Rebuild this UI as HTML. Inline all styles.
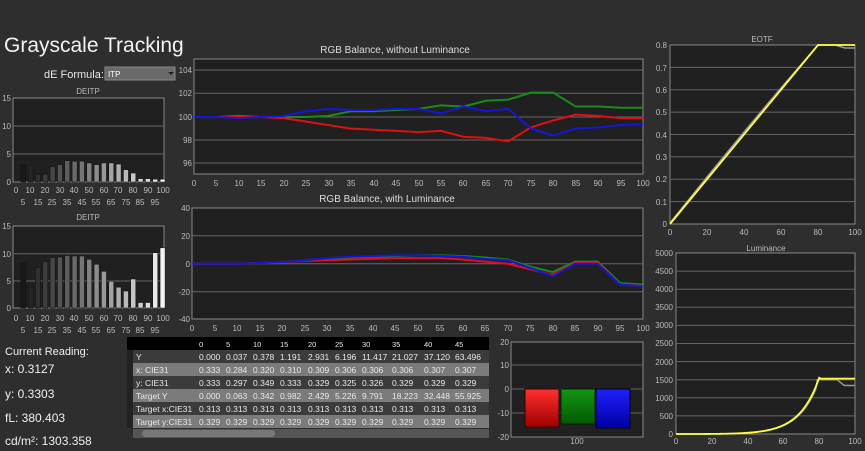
<!DOCTYPE html>
<html><head><meta charset="utf-8"><style>
html,body{margin:0;padding:0;background:#2e2e2e;width:865px;height:451px;overflow:hidden}
svg{display:block;font-family:"Liberation Sans",sans-serif}
.t{fill:#bbb;font-size:8px}
.g{stroke:#666;stroke-width:1}
.ax{stroke:#999;stroke-width:1;fill:none}
.w{fill:#fff}
</style></head><body>
<svg id="s" width="865" height="451" viewBox="0 0 865 451" xmlns="http://www.w3.org/2000/svg">
<text x="4" y="52" fill="#f2f2f2" font-size="21">Grayscale Tracking</text>
<text x="44" y="78" fill="#e8e8e8" font-size="11">dE Formula:</text>
<rect x="105" y="67" width="70" height="13" fill="#6a6a6a" stroke="#888"/>
<text x="108" y="77" fill="#fff" font-size="8">ITP</text>
<path d="M168 72 l3 3 3-3z" fill="#222"/>

<!-- left histograms -->
<text x="88" y="94" class="t" text-anchor="middle" font-size="7">DEITP</text>
<rect x="13" y="98" width="151" height="84" fill="#202020" stroke="#888"/>
<g class="g"><line x1="13" x2="164" y1="126" y2="126"/><line x1="13" x2="164" y1="154" y2="154"/></g>
<g class="t" text-anchor="end"><text x="11" y="101">15</text><text x="11" y="129">10</text><text x="11" y="157">5</text><text x="11" y="185">0</text></g>
<text x="88" y="220" class="t" text-anchor="middle" font-size="7">DEITP</text>
<rect x="13" y="226" width="151" height="82" fill="#202020" stroke="#888"/>
<g class="g"><line x1="13" x2="164" y1="253.7" y2="253.7"/><line x1="13" x2="164" y1="281" y2="281"/></g>
<g class="t" text-anchor="end"><text x="11" y="229">15</text><text x="11" y="257">10</text><text x="11" y="284">5</text><text x="11" y="311">0</text></g>
<g id="hist"></g>
<g class="t" text-anchor="middle">
<text x="16" y="193">0</text><text x="30" y="193">10</text><text x="45" y="193">20</text><text x="60" y="193">30</text><text x="74" y="193">40</text><text x="89" y="193">50</text><text x="104" y="193">60</text><text x="118" y="193">70</text><text x="133" y="193">80</text><text x="148" y="193">90</text><text x="163" y="193">100</text>
<text x="23" y="205">5</text><text x="38" y="205">15</text><text x="52" y="205">25</text><text x="67" y="205">35</text><text x="82" y="205">45</text><text x="96" y="205">55</text><text x="111" y="205">65</text><text x="126" y="205">75</text><text x="140" y="205">85</text><text x="155" y="205">95</text>
<text x="16" y="321">0</text><text x="30" y="321">10</text><text x="45" y="321">20</text><text x="60" y="321">30</text><text x="74" y="321">40</text><text x="89" y="321">50</text><text x="104" y="321">60</text><text x="118" y="321">70</text><text x="133" y="321">80</text><text x="148" y="321">90</text><text x="163" y="321">100</text>
<text x="23" y="333">5</text><text x="38" y="333">15</text><text x="52" y="333">25</text><text x="67" y="333">35</text><text x="82" y="333">45</text><text x="96" y="333">55</text><text x="111" y="333">65</text><text x="126" y="333">75</text><text x="140" y="333">85</text><text x="155" y="333">95</text>
</g>

<!-- RGB chart 1 -->
<text x="395" y="53" fill="#ddd" font-size="10" text-anchor="middle">RGB Balance, without Luminance</text>
<rect x="194" y="59" width="449" height="115" fill="#202020" stroke="#888"/>
<g class="g"><line x1="194" x2="643" y1="70" y2="70"/><line x1="194" x2="643" y1="93.3" y2="93.3"/><line x1="194" x2="643" y1="117" y2="117"/><line x1="194" x2="643" y1="140" y2="140"/><line x1="194" x2="643" y1="163" y2="163"/></g>
<g class="t" text-anchor="end"><text x="192" y="73">104</text><text x="192" y="96">102</text><text x="192" y="120">100</text><text x="192" y="143">98</text><text x="192" y="166">96</text></g>
<g class="t" text-anchor="middle">
<text x="194" y="186">0</text><text x="216" y="186">5</text><text x="239" y="186">10</text><text x="261" y="186">15</text><text x="284" y="186">20</text><text x="306" y="186">25</text><text x="329" y="186">30</text><text x="351" y="186">35</text><text x="374" y="186">40</text><text x="396" y="186">45</text><text x="419" y="186">50</text><text x="441" y="186">55</text><text x="463" y="186">60</text><text x="486" y="186">65</text><text x="508" y="186">70</text><text x="531" y="186">75</text><text x="553" y="186">80</text><text x="576" y="186">85</text><text x="598" y="186">90</text><text x="621" y="186">95</text><text x="643" y="186">100</text>
</g>
<!-- RGB chart 2 -->
<text x="387" y="202" fill="#ddd" font-size="10" text-anchor="middle">RGB Balance, with Luminance</text>
<rect x="192" y="208" width="451" height="111" fill="#202020" stroke="#888"/>
<g class="g"><line x1="192" x2="643" y1="235.7" y2="235.7"/><line x1="192" x2="643" y1="263.7" y2="263.7"/><line x1="192" x2="643" y1="291.7" y2="291.7"/></g>
<g class="t" text-anchor="end"><text x="190" y="211">40</text><text x="190" y="239">20</text><text x="190" y="267">0</text><text x="190" y="295">-20</text><text x="190" y="322">-40</text></g>
<g class="t" text-anchor="middle">
<text x="192" y="331">0</text><text x="215" y="331">5</text><text x="237" y="331">10</text><text x="260" y="331">15</text><text x="282" y="331">20</text><text x="305" y="331">25</text><text x="327" y="331">30</text><text x="350" y="331">35</text><text x="373" y="331">40</text><text x="395" y="331">45</text><text x="418" y="331">50</text><text x="440" y="331">55</text><text x="463" y="331">60</text><text x="485" y="331">65</text><text x="508" y="331">70</text><text x="530" y="331">75</text><text x="553" y="331">80</text><text x="575" y="331">85</text><text x="598" y="331">90</text><text x="620" y="331">95</text><text x="643" y="331">100</text>
</g>
<g id="lines" fill="none" stroke-width="2"></g>

<!-- EOTF -->
<text x="762" y="42" class="t" text-anchor="middle" font-size="7">EOTF</text>
<rect x="670" y="45" width="185" height="179" fill="#202020" stroke="#888"/>
<g class="g" id="eg"></g>
<g class="t" text-anchor="end"><text x="667" y="48">0.8</text><text x="667" y="71">0.7</text><text x="667" y="93">0.6</text><text x="667" y="115">0.5</text><text x="667" y="138">0.4</text><text x="667" y="160">0.3</text><text x="667" y="182">0.2</text><text x="667" y="205">0.1</text><text x="667" y="227">0</text></g>
<g class="t" text-anchor="middle"><text x="670" y="235">0</text><text x="707" y="235">20</text><text x="744" y="235">40</text><text x="781" y="235">60</text><text x="818" y="235">80</text><text x="855" y="235">100</text></g>
<!-- Luminance -->
<text x="766" y="251" class="t" text-anchor="middle" font-size="7">Luminance</text>
<rect x="676" y="253" width="179" height="181" fill="#202020" stroke="#888"/>
<g class="g" id="lg"></g>
<g class="t" text-anchor="end"><text x="673" y="256">5000</text><text x="673" y="274">4500</text><text x="673" y="292">4000</text><text x="673" y="310">3500</text><text x="673" y="328">3000</text><text x="673" y="346">2500</text><text x="673" y="365">2000</text><text x="673" y="383">1500</text><text x="673" y="401">1000</text><text x="673" y="419">500</text><text x="673" y="437">0</text></g>
<g class="t" text-anchor="middle"><text x="676" y="444">0</text><text x="712" y="444">20</text><text x="748" y="444">40</text><text x="783" y="444">60</text><text x="819" y="444">80</text><text x="855" y="444">100</text></g>
<g id="curves" fill="none"></g>

<!-- readings -->
<g fill="#f0f0f0" font-size="11">
<text x="5" y="355">Current Reading:</text>
<text x="5" y="373" font-size="12">x: 0.3127</text>
<text x="5" y="398" font-size="12">y: 0.3303</text>
<text x="5" y="422" font-size="12">fL: 380.403</text>
<text x="5" y="445" font-size="12">cd/m²: 1303.358</text>
</g>

<!-- table -->
<rect x="127" y="337" width="6" height="13" fill="#000"/>
<rect x="133" y="337" width="356" height="13" fill="#000"/>
<rect x="127" y="350" width="6" height="78" fill="#222"/>
<rect x="133" y="350" width="356" height="13" fill="#3b3b3b"/>
<rect x="133" y="363" width="356" height="13" fill="#7b7b7b"/>
<rect x="133" y="376" width="356" height="13" fill="#3b3b3b"/>
<rect x="133" y="389" width="356" height="13" fill="#7b7b7b"/>
<rect x="133" y="402" width="356" height="13" fill="#3b3b3b"/>
<rect x="133" y="415" width="356" height="13" fill="#7b7b7b"/>
<rect x="133" y="429" width="356" height="9" fill="#555"/>
<rect x="142" y="430" width="133" height="7" rx="3" fill="#777"/>
<g fill="#e8e8e8" font-size="8.5">
<text y="347" font-size="7.5"><tspan x="199">0</tspan><tspan x="226">5</tspan><tspan x="253">10</tspan><tspan x="280">15</tspan><tspan x="308">20</tspan><tspan x="335">25</tspan><tspan x="362">30</tspan><tspan x="392">35</tspan><tspan x="424">40</tspan><tspan x="455">45</tspan></text>
<text y="360"><tspan x="136">Y</tspan><tspan x="199">0.000</tspan><tspan x="226">0.037</tspan><tspan x="253">0.378</tspan><tspan x="280">1.191</tspan><tspan x="308">2.931</tspan><tspan x="335">6.196</tspan><tspan x="362">11.417</tspan><tspan x="392">21.027</tspan><tspan x="424">37.120</tspan><tspan x="455">63.496</tspan></text>
<text y="373"><tspan x="136">x: CIE31</tspan><tspan x="199">0.333</tspan><tspan x="226">0.284</tspan><tspan x="253">0.320</tspan><tspan x="280">0.310</tspan><tspan x="308">0.309</tspan><tspan x="335">0.306</tspan><tspan x="362">0.306</tspan><tspan x="392">0.306</tspan><tspan x="424">0.307</tspan><tspan x="455">0.307</tspan></text>
<text y="386"><tspan x="136">y: CIE31</tspan><tspan x="199">0.333</tspan><tspan x="226">0.297</tspan><tspan x="253">0.349</tspan><tspan x="280">0.333</tspan><tspan x="308">0.329</tspan><tspan x="335">0.325</tspan><tspan x="362">0.326</tspan><tspan x="392">0.329</tspan><tspan x="424">0.329</tspan><tspan x="455">0.329</tspan></text>
<text y="399"><tspan x="136">Target Y</tspan><tspan x="199">0.000</tspan><tspan x="226">0.063</tspan><tspan x="253">0.342</tspan><tspan x="280">0.982</tspan><tspan x="308">2.429</tspan><tspan x="335">5.226</tspan><tspan x="362">9.791</tspan><tspan x="392">18.223</tspan><tspan x="424">32.448</tspan><tspan x="455">55.925</tspan></text>
<text y="412"><tspan x="136">Target x:CIE31</tspan><tspan x="199">0.313</tspan><tspan x="226">0.313</tspan><tspan x="253">0.313</tspan><tspan x="280">0.313</tspan><tspan x="308">0.313</tspan><tspan x="335">0.313</tspan><tspan x="362">0.313</tspan><tspan x="392">0.313</tspan><tspan x="424">0.313</tspan><tspan x="455">0.313</tspan></text>
<text y="425"><tspan x="136">Target y:CIE31</tspan><tspan x="199">0.329</tspan><tspan x="226">0.329</tspan><tspan x="253">0.329</tspan><tspan x="280">0.329</tspan><tspan x="308">0.329</tspan><tspan x="335">0.329</tspan><tspan x="362">0.329</tspan><tspan x="392">0.329</tspan><tspan x="424">0.329</tspan><tspan x="455">0.329</tspan></text>
</g>

<!-- bar chart -->
<rect x="511" y="342" width="132" height="95" fill="#202020" stroke="#888"/>
<g class="g"><line x1="511" x2="643" y1="365" y2="365"/><line x1="511" x2="643" y1="389" y2="389"/><line x1="511" x2="643" y1="413" y2="413"/></g>
<g class="t" text-anchor="end"><text x="509" y="345">20</text><text x="509" y="368">10</text><text x="509" y="392">0</text><text x="509" y="416">-10</text><text x="509" y="440">-20</text></g>
<text x="577" y="444" class="t" text-anchor="middle">100</text>
<defs>
<linearGradient id="rg" x1="0" y1="0" x2="0" y2="1"><stop offset="0" stop-color="#ff3030"/><stop offset="1" stop-color="#a00000"/></linearGradient>
<linearGradient id="gg" x1="0" y1="0" x2="0" y2="1"><stop offset="0" stop-color="#139613"/><stop offset="1" stop-color="#045a04"/></linearGradient>
<linearGradient id="bg" x1="0" y1="0" x2="0" y2="1"><stop offset="0" stop-color="#2020ff"/><stop offset="1" stop-color="#0000a0"/></linearGradient>
</defs>
<rect x="525" y="389" width="34" height="38" fill="url(#rg)" stroke="#300" />
<rect x="561" y="389" width="34" height="35" fill="url(#gg)" stroke="#020"/>
<rect x="596" y="389" width="34" height="39" fill="url(#bg)" stroke="#002"/>
</svg>
<script>
var NS="http://www.w3.org/2000/svg";
function el(p,t,a){var e=document.createElementNS(NS,t);for(var k in a)e.setAttribute(k,a[k]);p.appendChild(e);return e;}
var h=document.getElementById('hist');
var top1=[3.1,2.9,1.4,1.4,2.7,3.1,3.8,3.7,3.7,3.4,3.1,3.4,3.4,3.2,2.2,1.6,0.6,0.6,0.5,0.5];
var bot=[8.2,4,7.4,8.5,9.2,9.3,9.6,9.5,9.5,8.9,8,6.7,4.9,3.8,3.1,5.3,1,1,10.1,11];
for(var i=0;i<20;i++){var x=23.3+i*7.33-2.5;var c=Math.round(25+i*11.5);var col='rgb('+c+','+c+','+c+')';
el(h,'rect',{x:x,y:182-top1[i]*5.6,width:5,height:top1[i]*5.6,fill:col,stroke:'#111','stroke-width':0.5});
el(h,'rect',{x:x,y:308-bot[i]*5.47,width:5,height:bot[i]*5.47,fill:col,stroke:'#111','stroke-width':0.5});}
var L=document.getElementById('lines');
function pl(d,fx,fy,c){var p=d.map(function(v,i){return fx(i)+','+fy(v)}).join(' ');el(L,'polyline',{points:p,stroke:c});}
var f1x=function(i){return 194+i*22.45},f1y=function(v){return 117-(v-100)*11.6};
pl([100,100,100.1,100,100,100,100.1,100.5,100.5,100.6,100.7,101,100.9,101.4,101.5,102.1,102.1,100.9,100.9,100.8,100.8],f1x,f1y,'#1a8a1a');
pl([100,100,100,100,99.9,99.6,99.3,99,98.9,98.8,98.7,98.8,98.3,98.2,97.9,99.1,99.7,100.2,100.1,99.9,99.9],f1x,f1y,'#e01010');
pl([100,100,99.9,100,100.1,100.5,100.7,100.6,100.6,100.7,100.7,100.3,100.9,100.5,100.7,99,98.4,99,99.1,99.3,99.4],f1x,f1y,'#1515e0');
var f2x=function(i){return 192.3+i*22.52},f2y=function(v){return 263.7-v*1.39};
pl([0,0,0,0.5,1,2.5,3.5,4.5,5,5.5,6,6,5.5,4.5,3,-2,-6,1.5,1.5,-14,-15],f2x,f2y,'#1a8a1a');
pl([0,0,0,0.5,1,2,2.5,3,3.5,4,4,4,3,1.5,0,-4,-8,0.5,0.5,-15,-16],f2x,f2y,'#e01010');
pl([0,0,0,0.5,1,2.5,4,5,5.5,6,6,5.5,5,3.5,2.5,-3,-9,0,0,-15,-16],f2x,f2y,'#1515e0');
var eg=document.getElementById('eg');for(var k=1;k<8;k++){var y=224-k*22.375;el(eg,'line',{x1:670,x2:855,y1:y,y2:y});}
var lg=document.getElementById('lg');for(var k=1;k<10;k++){var y=434-k*18.1;el(lg,'line',{x1:676,x2:855,y1:y,y2:y});}
var C=document.getElementById('curves');
el(C,'polyline',{points:'670,223 707,177 744,132 781,88 818,45 835,45 845,48 855,48',stroke:'#999','stroke-width':1.5});
el(C,'polyline',{points:'670,224 818,45 855,45',stroke:'#ffff40','stroke-width':1.8});
function pq(e){var m1=0.1593017578125,m2=78.84375,c1=0.8359375,c2=18.8515625,c3=18.6875;var p=Math.pow(e,1/m2);return 10000*Math.pow(Math.max(p-c1,0)/(c2-c3*p),1/m1);}
var pts=[],pts2=[];for(var x=0;x<=100;x+=1){var v=x<=80?pq(x/100):1530;var lx=676+x*1.79;pts.push(lx+','+(434-v*0.0362));
var v2=x<=78?pq(x/100)*0.95:(x<=90?1500:(x<=94?1500-(x-90)*40:1340));pts2.push(lx+','+(434-v2*0.0362));}
el(C,'polyline',{points:pts2.join(' '),stroke:'#999','stroke-width':1.5});
el(C,'polyline',{points:pts.join(' '),stroke:'#ffff40','stroke-width':1.8});
</script>
</body></html>
